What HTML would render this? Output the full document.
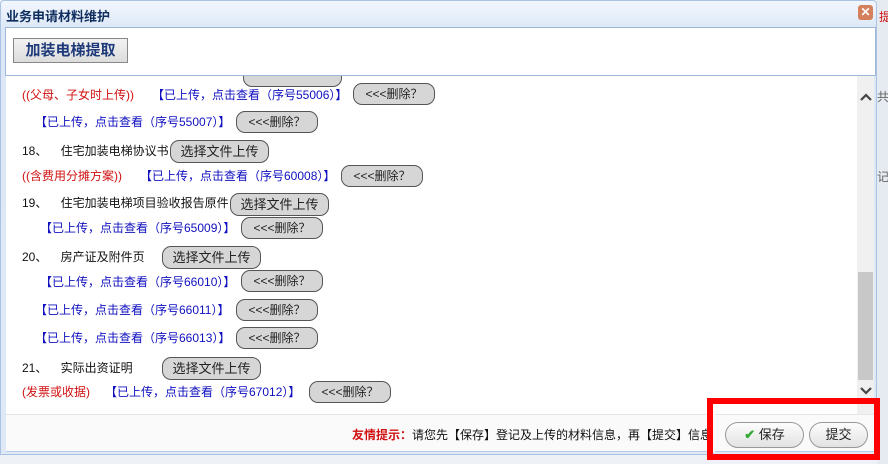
<!DOCTYPE html>
<html><head><meta charset="utf-8"><style>
*{margin:0;padding:0;box-sizing:border-box}
body{width:888px;height:464px;overflow:hidden;background:#eef2f7;font-family:"Liberation Sans","Noto Sans CJK SC",sans-serif;font-size:12px;position:relative}
.a{position:absolute;white-space:nowrap}
.dlg{position:absolute;left:0;top:0;width:877px;height:455px;background:linear-gradient(#f3f7fd,#dce8f7 27px,#dfe9f6);border:1px solid #aac3e4;border-radius:4px 4px 0 0}
.title{left:6px;top:6px;font-size:13px;font-weight:bold;color:#0e2d5e}
.close{left:858px;top:5px;width:15px;height:15px;background:#d4805c;border-radius:3px;color:#fff;font-size:12px;font-weight:bold;line-height:15px;text-align:center}
.top{left:5px;top:27px;width:871px;height:49px;background:#fff;border:1px solid #9fb8da}
.tbtn{left:13px;top:38px;width:115px;height:25px;background:linear-gradient(#f2f2f2,#dcdcdc);border:1px solid #888;color:#1e3a7a;font-size:15px;font-weight:bold;line-height:23px;text-align:center}
.content{left:6px;top:76px;width:851px;height:338px;background:#fff;overflow:hidden}
.sb{left:857px;top:76px;width:17px;height:338px;background:#f0f0f0}
.thumb{left:858px;top:272px;width:15px;height:108px;background:#c8c8c8}
.footer{left:6px;top:414px;width:869px;height:38px;background:#fafafa;border-top:1px solid #e6e6e6;border-bottom:1px solid #b7cbe6}
.r{color:#d01010}.b{color:#1010c0}.k{color:#111}
.t{line-height:16px;font-size:12px}
.btn{position:absolute;background:#d6d6d6;border:1px solid #555;border-radius:9px;color:#222;text-align:center;font-size:12px}
.del{width:82px;height:22px;line-height:20px}
.up{width:99px;height:23px;line-height:21px;font-size:13px}
.fb{position:absolute;top:422px;height:26px;border:1px solid #999;border-radius:13px;background:linear-gradient(#fdfdfd,#e2e2e2);font-size:13px;line-height:24px;text-align:center;color:#222}
.red{position:absolute;left:707px;top:398px;width:173px;height:62px;border:6px solid #ff0000}
</style></head><body>
<div class="a" style="left:877px;top:0;width:11px;height:464px;background:#e6ebf2"></div>
<div class="a r" style="left:879px;top:8px;font-size:12px">提</div>
<div class="a" style="left:877px;top:88px;color:#666">共</div>
<div class="a" style="left:877px;top:168px;color:#666">记</div>
<div class="dlg"></div>
<div class="a title">业务申请材料维护</div>
<div class="a close">✕</div>
<div class="a top"></div>
<div class="a tbtn">加装电梯提取</div>
<div class="a content">
 <div class="btn up" style="left:237px;top:-12px"></div>
 <div class="a t r" style="left:16px;top:11px">((父母、子女时上传))</div>
 <div class="a t b" style="left:146px;top:11px">【已上传，点击查看（序号55006）】</div>
 <div class="btn del" style="left:347px;top:7px">&lt;&lt;&lt;删除？</div>
 <div class="a t b" style="left:29px;top:38px">【已上传，点击查看（序号55007）】</div>
 <div class="btn del" style="left:230px;top:35px">&lt;&lt;&lt;删除？</div>
 <div class="a t k" style="left:16px;top:67px">18、&nbsp;&nbsp;&nbsp; 住宅加装电梯协议书</div>
 <div class="btn up" style="left:164px;top:64px">选择文件上传</div>
 <div class="a t r" style="left:16px;top:92px">((含费用分摊方案))</div>
 <div class="a t b" style="left:134px;top:92px">【已上传，点击查看（序号60008）】</div>
 <div class="btn del" style="left:335px;top:89px">&lt;&lt;&lt;删除？</div>
 <div class="a t k" style="left:16px;top:119px">19、&nbsp;&nbsp;&nbsp; 住宅加装电梯项目验收报告原件</div>
 <div class="btn up" style="left:224px;top:117px">选择文件上传</div>
 <div class="a t b" style="left:34px;top:144px">【已上传，点击查看（序号65009）】</div>
 <div class="btn del" style="left:235px;top:141px">&lt;&lt;&lt;删除？</div>
 <div class="a t k" style="left:16px;top:173px">20、&nbsp;&nbsp;&nbsp; 房产证及附件页</div>
 <div class="btn up" style="left:156px;top:170px">选择文件上传</div>
 <div class="a t b" style="left:34px;top:198px">【已上传，点击查看（序号66010）】</div>
 <div class="btn del" style="left:235px;top:194px">&lt;&lt;&lt;删除？</div>
 <div class="a t b" style="left:29px;top:226px">【已上传，点击查看（序号66011）】</div>
 <div class="btn del" style="left:230px;top:223px">&lt;&lt;&lt;删除？</div>
 <div class="a t b" style="left:29px;top:254px">【已上传，点击查看（序号66013）】</div>
 <div class="btn del" style="left:230px;top:251px">&lt;&lt;&lt;删除？</div>
 <div class="a t k" style="left:16px;top:284px">21、&nbsp;&nbsp;&nbsp; 实际出资证明</div>
 <div class="btn up" style="left:156px;top:281px">选择文件上传</div>
 <div class="a t r" style="left:16px;top:308px">(发票或收据)</div>
 <div class="a t b" style="left:99px;top:308px">【已上传，点击查看（序号67012）】</div>
 <div class="btn del" style="left:303px;top:305px">&lt;&lt;&lt;删除？</div>
</div>
<div class="a sb"></div>
<div class="a thumb"></div>
<svg class="a" style="left:859px;top:92px" width="14" height="10"><path d="M2 8 L7 3 L12 8" stroke="#444" stroke-width="2.2" fill="none"/></svg>
<svg class="a" style="left:859px;top:386px" width="14" height="10"><path d="M2 2 L7 7 L12 2" stroke="#444" stroke-width="2.2" fill="none"/></svg>
<div class="a footer"></div>
<div class="a" style="left:352px;top:426px;font-size:12px"><span class="r" style="font-weight:bold">友情提示：</span><span class="k">请您先【保存】登记及上传的材料信息，再【提交】信息</span></div>
<div class="a" style="left:707px;top:410px;width:8px;height:42px;background:#fafafa"></div>
<div class="fb" style="left:725px;width:79px"><span style="color:#3a3;font-weight:bold">✔</span> 保存</div>
<div class="fb" style="left:809px;width:59px">提交</div>
<div class="red"></div>
</body></html>
